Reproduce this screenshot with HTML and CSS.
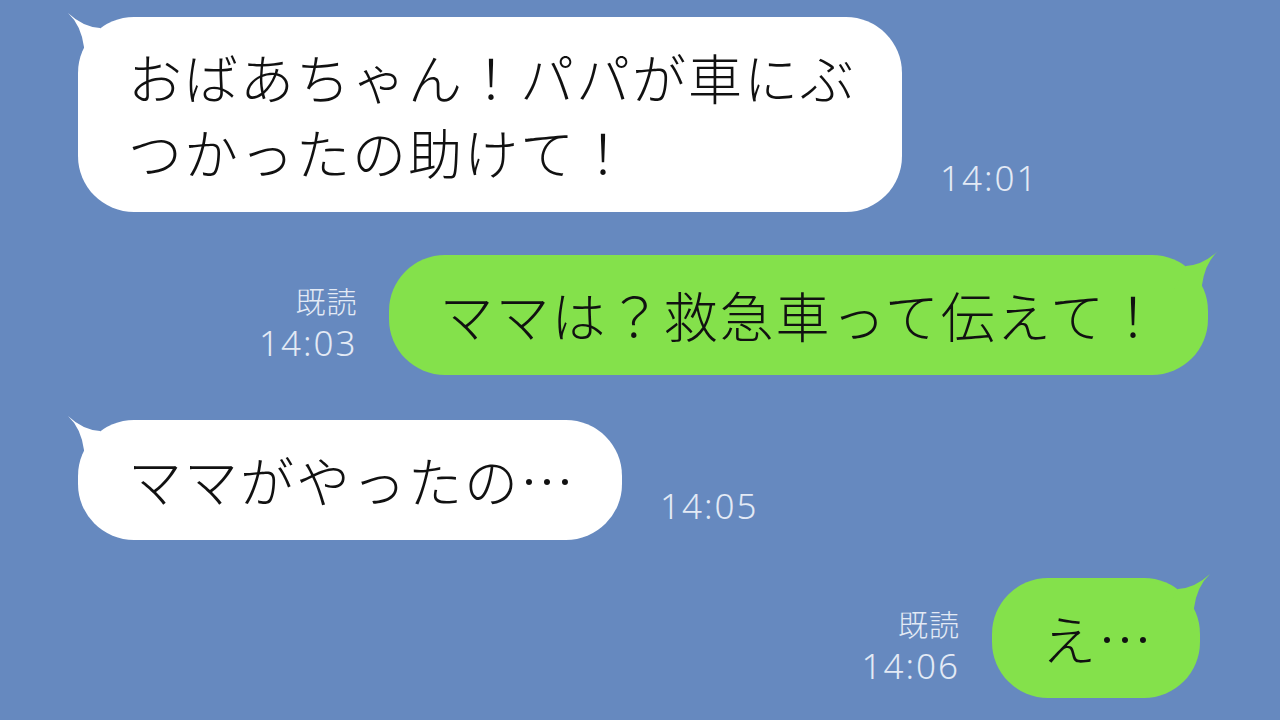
FILE: index.html
```html
<!DOCTYPE html>
<html lang="ja">
<head>
    <meta charset="UTF-8">
    <meta name="viewport" content="width=device-width, initial-scale=1.0">
    <title>Chat</title>
    <link rel="stylesheet" href="styles.css">
</head>
<body>
    <div class="chat">
        <div class="row them">
            <div class="bubble">
                <svg class="tail" viewBox="-12 -6 50 50" width="50" height="50"><path d="M-10 -4 Q5 10 22 11 L34 34 L6 34 L6 30 Q3 8 -10 -4 Z"/></svg>
                おばあちゃん！パパが車にぶ<br>つかったの助けて！
            </div>
            <div class="meta">14:01</div>
        </div>
        <div class="row me">
            <div class="meta"><span>既読</span><span>14:03</span></div>
            <div class="bubble">
                <svg class="tail" viewBox="-12 -6 50 50" width="50" height="50"><path d="M-10 -4 Q5 10 22 11 L34 34 L6 34 L6 30 Q3 8 -10 -4 Z"/></svg>
                ママは？救急車って伝えて！
            </div>
        </div>
        <div class="row them third">
            <div class="bubble">
                <svg class="tail" viewBox="-12 -6 50 50" width="50" height="50"><path d="M-10 -4 Q5 10 22 11 L34 34 L6 34 L6 30 Q3 8 -10 -4 Z"/></svg>
                ママがやったの…
            </div>
            <div class="meta">14:05</div>
        </div>
        <div class="row me last">
            <div class="meta"><span>既読</span><span>14:06</span></div>
            <div class="bubble">
                <svg class="tail" viewBox="-12 -6 50 50" width="50" height="50"><path d="M-10 -4 Q5 10 22 11 L34 34 L6 34 L6 30 Q3 8 -10 -4 Z"/></svg>
                え…
            </div>
        </div>
    </div>
</body>
</html>
```
FILE: styles.css
```css
* {
    margin: 0;
    padding: 0;
    box-sizing: border-box;
}
body {
    background: #6689bf;
    font-family: "Noto Sans CJK JP", "Noto Sans", sans-serif;
    width: 1280px;
    height: 720px;
    overflow: hidden;
}
.chat {
    display: flex;
    flex-direction: column;
    gap: 43px;
    padding-top: 17px;
}
.row {
    display: flex;
    align-items: flex-end;
}
.row.them {
    padding-left: 78px;
}
.row.third {
    margin-top: 2px;
}
.row.me {
    justify-content: flex-end;
    padding-right: 72px;
}
.row.me.last {
    padding-right: 80px;
    margin-top: -5px;
}
.bubble {
    position: relative;
    background: #fff;
    color: #111;
    font-size: 54px;
    font-weight: 300;
    letter-spacing: 2px;
    line-height: 75px;
    padding: 22px 46px 23px 50px;
    border-radius: 56px;
    white-space: nowrap;
}
.me .bubble {
    background: #84e14b;
    padding: 22px 46px 23px 50px;
}
.tail {
    position: absolute;
    left: -12px;
    top: -6px;
    fill: #fff;
}
.me .tail {
    left: auto;
    right: -12px;
    transform: scaleX(-1);
    fill: #84e14b;
}
.meta {
    color: #e3eaf5;
    font-family: "Noto Sans", "Noto Sans CJK JP", sans-serif;
    font-weight: 300;
    font-size: 35px;
    letter-spacing: 2px;
    line-height: 40px;
    margin-bottom: 14px;
}
.them .meta {
    margin-left: 38px;
}
.me .meta {
    display: flex;
    flex-direction: column;
    align-items: flex-end;
    margin-right: 32px;
    margin-bottom: 12px;
}
.me .meta span:first-child {
    font-family: "Noto Sans CJK JP", sans-serif;
    font-size: 30px;
    letter-spacing: 1px;
    line-height: 46px;
}
```
